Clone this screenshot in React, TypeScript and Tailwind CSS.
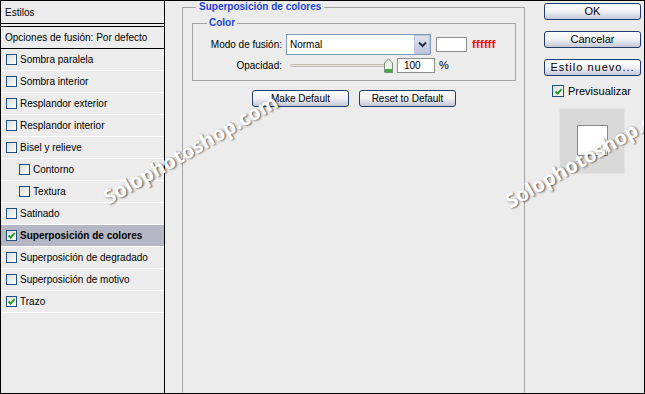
import React from 'react';

type Row = { label: string; checked?: boolean; active?: boolean; sub?: boolean };

const rows: Row[] = [
  { label: 'Sombra paralela' },
  { label: 'Sombra interior' },
  { label: 'Resplandor exterior' },
  { label: 'Resplandor interior' },
  { label: 'Bisel y relieve' },
  { label: 'Contorno', sub: true },
  { label: 'Textura', sub: true },
  { label: 'Satinado' },
  { label: 'Superposición de colores', checked: true, active: true },
  { label: 'Superposición de degradado' },
  { label: 'Superposición de motivo' },
  { label: 'Trazo', checked: true },
];

function CheckBox({ checked, size = 11 }: { checked?: boolean; size?: number }) {
  return (
    <div
      className={`${size === 11 ? 'w-[11px] h-[11px]' : 'w-[12px] h-[12px]'} shrink-0 border border-[#1c5180] bg-linear-to-br from-[#dcdcd7] to-white flex items-center justify-center`}
    >
      {checked && (
        <svg width="9" height="9" viewBox="0 0 9 9">
          <path d="M1.5 4.5 L3.6 6.6 L7.6 2.2" fill="none" stroke="#21a121" strokeWidth="1.8" />
        </svg>
      )}
    </div>
  );
}

function Btn({ children, className = '' }: { children: React.ReactNode; className?: string }) {
  return (
    <button
      className={`w-[97px] h-[17px] rounded-[3px] border border-[#1f3d6a] bg-linear-to-b from-white via-[#f1f1f5] to-[#c3c7d7] flex items-center justify-center leading-none text-black ${className}`}
    >
      {children}
    </button>
  );
}

function Watermark({ className }: { className: string }) {
  return (
    <span
      className={`absolute origin-left -rotate-[30deg] font-['Noto_Sans',sans-serif] font-bold text-[20px] leading-[24px] text-white whitespace-nowrap [text-shadow:1px_1px_2px_rgba(0,0,0,0.6)] pointer-events-none ${className}`}
    >
      Solophotoshop.com
    </span>
  );
}

export default function App() {
  return (
    <div className="relative w-[645px] h-[394px] overflow-hidden bg-[#ececec] border border-black flex font-['Liberation_Sans',Arial,sans-serif] text-[10px] text-black">
      {/* Left - styles list */}
      <div className="w-[164px] shrink-0 border-r border-black flex flex-col">
        <div className="h-[22px] pl-[4px] flex items-center">Estilos</div>
        <div className="h-[4px] border-y border-black"></div>
        <div className="h-[22px] pl-[4px] flex items-center border-b border-black">Opciones de fusión: Por defecto</div>
        {rows.map((r) => (
          <div
            key={r.label}
            className={`h-[22px] border-b border-white flex items-center gap-[3px] ${r.sub ? 'pl-[18px]' : 'pl-[5px]'} ${r.active ? 'bg-[#b5b7c4] font-bold' : ''}`}
          >
            <CheckBox checked={r.checked} />
            <span>{r.label}</span>
          </div>
        ))}
      </div>

      {/* Middle - settings */}
      <div className="w-[360px] shrink-0 flex pl-[17px]">
        <fieldset className="w-[343px] min-w-0 border border-b-0 border-[#a3a3a3] px-[9px]">
          <legend className="ml-[4px] px-[3px] font-bold text-[#1d45da] leading-[12px]">Superposición de colores</legend>
          <fieldset className="mt-[4px] w-[324px] border border-[#a3a3a3] px-[10px] pb-[6px]">
            <legend className="ml-[4px] px-[2px] font-bold text-[#1d45da] leading-[12px]">Color</legend>
            <div className="mt-[5px] flex items-center h-[21px]">
              <span className="w-[79px] text-right">Modo de fusión:</span>
              <div className="ml-[4px] w-[145px] h-[21px] border border-[#7f9db9] bg-white flex items-center">
                <span className="pl-[3px] flex-1">Normal</span>
                <div className="w-[16px] h-full border border-[#b9c4dc] bg-linear-to-b from-[#dfe4ef] to-[#bcc5dc] flex items-center justify-center">
                  <svg width="9" height="7" viewBox="0 0 9 7">
                    <path d="M1 1.5 L4.5 5 L8 1.5" fill="none" stroke="#2a2f45" strokeWidth="2" />
                  </svg>
                </div>
              </div>
              <div className="ml-[5px] w-[31px] h-[15px] bg-white border border-[#8d8d8d]"></div>
              <span className="ml-[5px] font-bold text-[11px] tracking-[0.3px] text-[#ff0000]">ffffff</span>
            </div>
            <div className="mt-[2px] flex items-center h-[17px]">
              <span className="w-[79px] text-right">Opacidad:</span>
              <div className="relative ml-[8px] w-[103px] h-[17px]">
                <div className="absolute left-0 right-[4px] top-[7px] h-[3px] rounded-full border border-[#c2beb2] bg-[#e8e5dc]"></div>
                <svg className="absolute right-0 top-[1px]" width="9" height="15" viewBox="0 0 9 15">
                  <path d="M0.5 5 L4.5 0.8 L8.5 5 V14.5 H0.5 Z" fill="#eef0ee" stroke="#7d8d7d" />
                  <rect x="1" y="11" width="7" height="3" fill="#3fae3f" />
                </svg>
              </div>
              <div className="ml-[4px] w-[38px] h-[15px] bg-white border border-[#8d8d8d] flex items-center pl-[6px]">100</div>
              <span className="ml-[4px] self-start text-[11px]">%</span>
            </div>
          </fieldset>
          <div className="mt-[9px] ml-[60px] flex gap-[10px] text-[10px]">
            <Btn>Make Default</Btn>
            <Btn className="w-[96px]">Reset to Default</Btn>
          </div>
        </fieldset>
      </div>

      {/* Right - actions */}
      <div className="flex-1 pl-[19px] pt-[2px] flex flex-col text-[11px]">
        <Btn>OK</Btn>
        <Btn className="mt-[11px]">Cancelar</Btn>
        <Btn className="mt-[11px] tracking-[1px]">Estilo nuevo...</Btn>
        <div className="mt-[7px] ml-[8px] flex items-center gap-[4px]">
          <CheckBox checked size={12} />
          <span>Previsualizar</span>
        </div>
        <div className="mt-[8px] ml-[15px] w-[66px] h-[66px] bg-[#d9d9d9] border border-[#e4e4e4] flex items-center justify-center">
          <div className="w-[31px] h-[31px] bg-white border border-[#8a8a8a]"></div>
        </div>
      </div>

      <Watermark className="left-[104px] top-[186px]" />
      <Watermark className="left-[506px] top-[190px]" />
    </div>
  );
}
